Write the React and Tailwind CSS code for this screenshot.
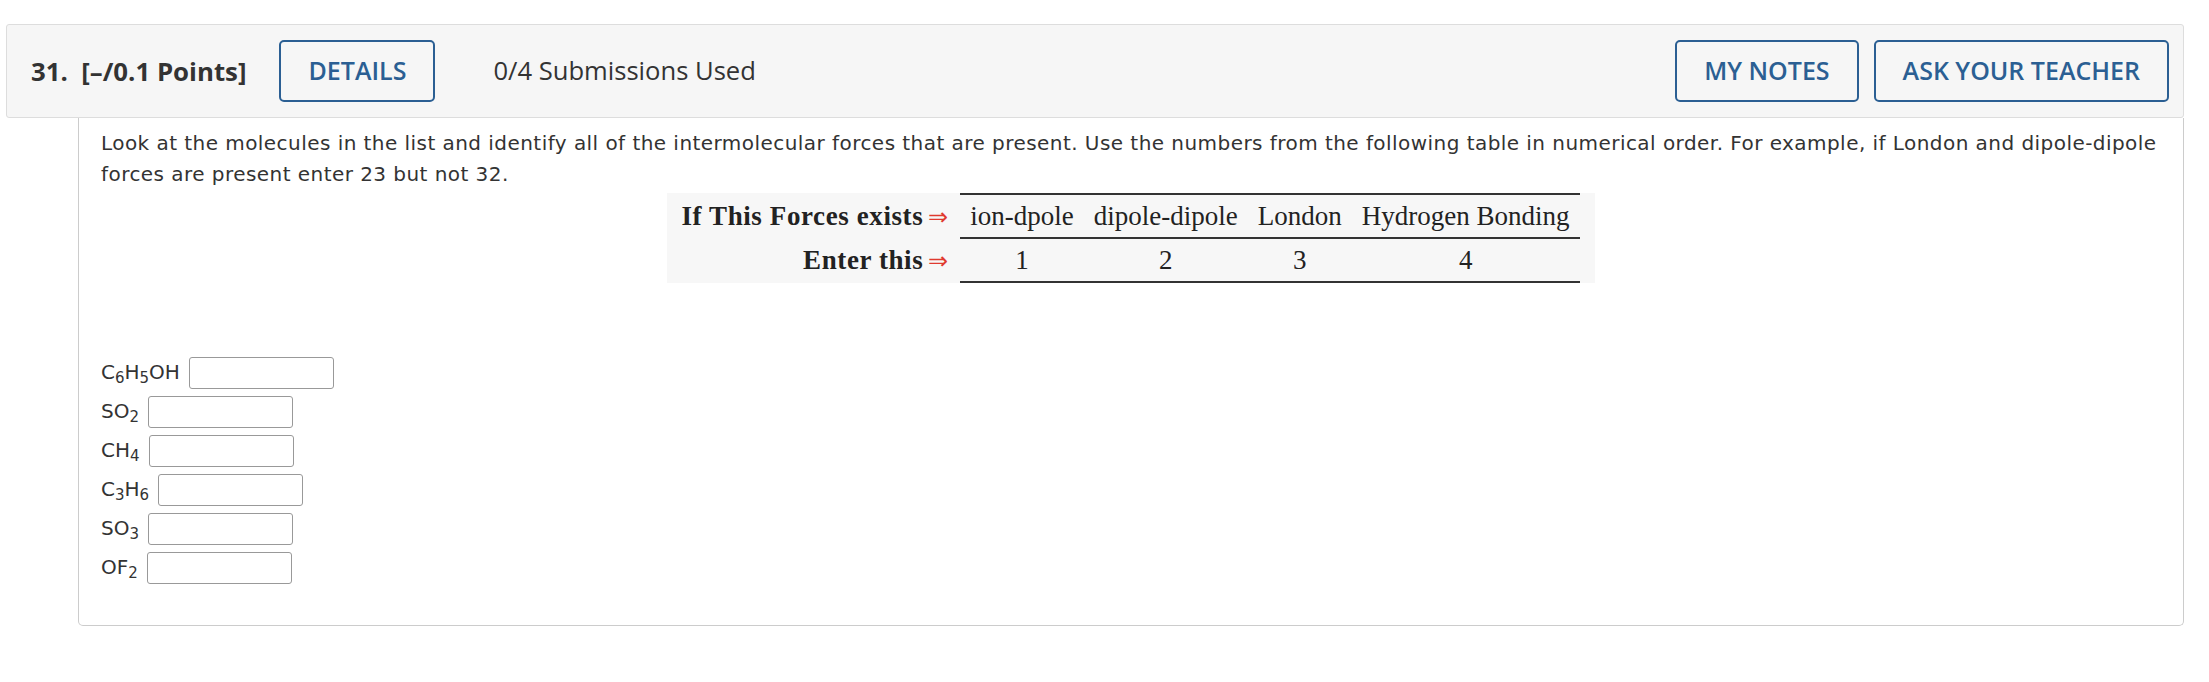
import React from 'react'

const molecules = [
  { id: 'c6h5oh', label: <>C<sub>6</sub>H<sub>5</sub>OH</> },
  { id: 'so2', label: <>SO<sub>2</sub></> },
  { id: 'ch4', label: <>CH<sub>4</sub></> },
  { id: 'c3h6', label: <>C<sub>3</sub>H<sub>6</sub></> },
  { id: 'so3', label: <>SO<sub>3</sub></> },
  { id: 'of2', label: <>OF<sub>2</sub></> }
]

const forces = [
  { name: 'ion-dpole', value: 1 },
  { name: 'dipole-dipole', value: 2 },
  { name: 'London', value: 3 },
  { name: 'Hydrogen Bonding', value: 4 }
]

function Arrow() {
  return <span className="text-[#e03a2f] text-[24px] ml-[5px] font-normal tracking-normal">⇒</span>
}

function OutlineButton({ children }) {
  return (
    <button className="h-[62px] px-[27px] border-2 border-[#2b5f93] rounded-[5px] text-[25px] font-semibold text-[#2b5f93] bg-transparent">
      {children}
    </button>
  )
}

export default function App() {
  return (
    <div className="min-h-[682px] bg-white pt-[24px] pl-[6px] pr-[25px] font-['Open_Sans',sans-serif] text-[#333]">
      <header className="h-[94px] flex items-center bg-[#f6f6f6] border border-[#dddddd] rounded-[3px] pl-[24px] pr-[14px]">
        <span className="text-[25.8px] font-bold whitespace-pre">31.  [–/0.1 Points]</span>
        <div className="ml-[33px]">
          <OutlineButton>DETAILS</OutlineButton>
        </div>
        <span className="ml-[58px] text-[25.6px]">0/4 Submissions Used</span>
        <div className="ml-auto flex gap-[15px]">
          <OutlineButton>MY NOTES</OutlineButton>
          <OutlineButton>ASK YOUR TEACHER</OutlineButton>
        </div>
      </header>

      <section className="ml-[72px] border-x border-b border-[#cccccc] rounded-b-[5px] pt-[10px] pl-[22px] pr-[22px] pb-[38px] font-['DejaVu_Sans',Verdana,sans-serif] text-[20px] tracking-[0.45px] leading-[31px] text-[#333]">
        <p>
          Look at the molecules in the list and identify all of the intermolecular forces that are present. Use the
          numbers from the following table in numerical order. For example, if London and dipole-dipole forces are
          present enter 23 but not 32.
        </p>

        <div className="flex justify-center mt-[3px] tracking-normal">
          <table className="bg-[#f7f7f7] border-collapse font-['Liberation_Serif','Times_New_Roman',serif] text-[27px] text-[#222] leading-none">
            <tbody>
              <tr className="h-[44px]">
                <td className="pl-[14px] pr-[12px] text-right font-bold whitespace-nowrap tracking-[0.6px]">
                  If This Forces exists
                  <Arrow />
                </td>
                {forces.map(f => (
                  <td key={f.name} className="border-t-2 border-[#333] px-[10px] text-center whitespace-nowrap">
                    {f.name}
                  </td>
                ))}
                <td className="w-[15px]"></td>
              </tr>
              <tr className="h-[44px]">
                <td className="pl-[14px] pr-[12px] text-right font-bold whitespace-nowrap tracking-[0.6px]">
                  Enter this
                  <Arrow />
                </td>
                {forces.map(f => (
                  <td key={f.name} className="border-y-2 border-[#333] px-[10px] text-center">
                    {f.value}
                  </td>
                ))}
                <td className="w-[15px]"></td>
              </tr>
            </tbody>
          </table>
        </div>

        <div className="mt-[70px] flex flex-col tracking-normal">
          {molecules.map(m => (
            <div key={m.id} className="h-[39px] flex items-center">
              <span className="text-[20px]">{m.label}</span>
              <input
                type="text"
                className="ml-[9px] w-[145px] h-[32px] border border-[#999] rounded-[3px] bg-white"
              />
            </div>
          ))}
        </div>
      </section>
    </div>
  )
}
